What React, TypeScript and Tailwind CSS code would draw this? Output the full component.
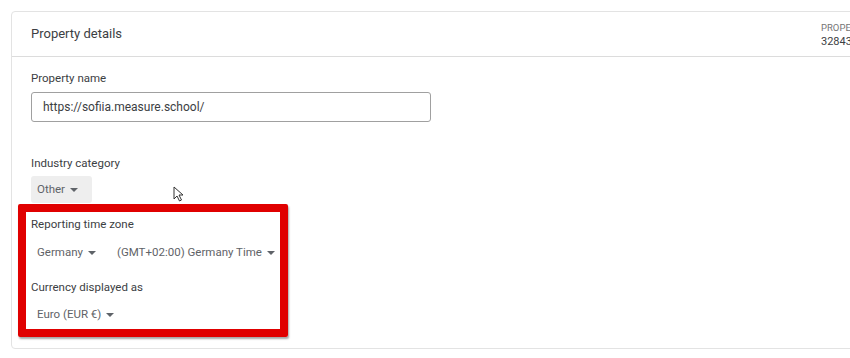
import React from "react";

function Caret() {
  return (
    <svg width="8" height="4" viewBox="0 0 8 4" className="ml-[5px] inline-block shrink-0">
      <path d="M0 0 L8 0 L4 4 Z" fill="#5f6368" />
    </svg>
  );
}

function Dropdown({ label, className = "" }: { label: string; className?: string }) {
  return (
    <button className={`flex h-[27px] items-center whitespace-nowrap rounded-[3px] px-[6px] text-[11.5px] text-[#5f6368] ${className}`}>
      {label}
      <Caret />
    </button>
  );
}

export default function App() {
  return (
    <div
      className="h-[358px] w-[850px] overflow-hidden bg-white"
      style={{ fontFamily: "Roboto, 'Noto Sans', Arial, sans-serif" }}
    >
      <div className="ml-[11px] mt-[11px] w-[860px] rounded-[4px] border border-[#e3e3e3]">
        {/* header */}
        <div className="flex h-[45px] items-center justify-between border-b border-[#dcdcdc] pl-[19px]">
          <h2 className="whitespace-nowrap text-[13px] text-[#3c4043]">Property details</h2>
          <div className="w-[49px] whitespace-nowrap pt-[2px] leading-[14px]">
            <div className="text-[9.5px] uppercase text-[#757575]">Property ID</div>
            <div className="text-[11px] text-[#3c4043]">328431234</div>
          </div>
        </div>

        {/* body */}
        <div className="pb-[20px] pl-[19px] pt-[13px]">
          <label className="block text-[11.5px] leading-[16px] text-[#3c4043]">Property name</label>
          <div className="mt-[6px] flex h-[30px] w-[400px] items-center rounded-[3px] border border-[#a0a0a0] px-[11px] text-[12px] text-[#3c4043]">
            https://sofiia.measure.school/
          </div>

          <label className="mt-[33px] block text-[11.5px] leading-[16px] text-[#3c4043]">Industry category</label>
          <div className="mt-[5px] flex">
            <Dropdown label="Other" className="w-[61px] bg-[#eeeeee]" />
            {/* mouse cursor */}
            <svg width="12" height="17" viewBox="0 0 12 17" className="ml-[81px] mt-[10px]">
              <path d="M1 1 L1 13 L4 10 L6.5 15 L8.5 14 L6 9 L10 9 Z" fill="white" stroke="#333" strokeWidth="1" strokeLinejoin="round" />
            </svg>
          </div>

          <div className="relative mt-[6px] w-[257px] pt-[7px]">
            <label className="block text-[11.5px] leading-[16px] text-[#3c4043]">Reporting time zone</label>
            <div className="mt-[7px] flex gap-[9px]">
              <Dropdown label="Germany" />
              <Dropdown label="(GMT+02:00) Germany Time" />
            </div>
            <label className="mt-[13px] block text-[11.5px] leading-[16px] text-[#3c4043]">Currency displayed as</label>
            <div className="mt-[6px] flex">
              <Dropdown label="Euro (EUR €)" />
            </div>
            {/* annotation box */}
            <div className="pointer-events-none absolute -bottom-[9px] -left-[13px] right-0 -top-[5px] rounded-[2px] border-[8px] border-[#e00000] shadow-[1px_2px_2px_rgba(0,0,0,0.35)]" />
          </div>
        </div>
      </div>
    </div>
  );
}
